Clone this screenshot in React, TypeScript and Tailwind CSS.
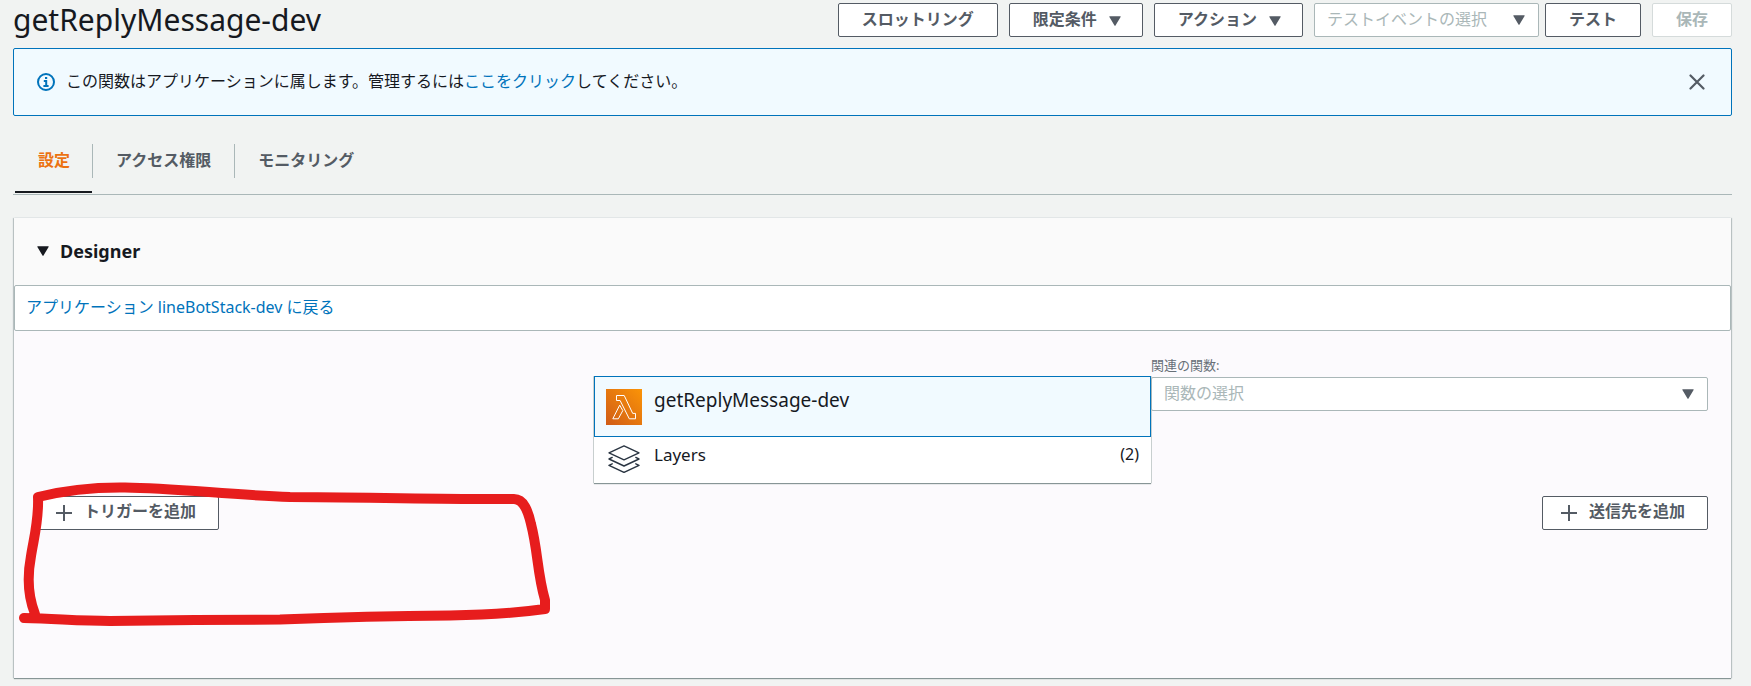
import type { ReactNode } from "react";

function Caret({ className = "" }: { className?: string }) {
  return (
    <svg viewBox="0 0 12 10" className={`h-2.5 w-3 shrink-0 fill-current ${className}`} aria-hidden="true">
      <path d="M0.8 0.3h10.4a.5.5 0 0 1 .4.8L6.5 9.5a.6.6 0 0 1-1 0L.4 1.1a.5.5 0 0 1 .4-.8z" />
    </svg>
  );
}

function PlusIcon() {
  return (
    <svg viewBox="0 0 16 16" className="h-4 w-4 shrink-0 stroke-current" strokeWidth="2" fill="none" aria-hidden="true">
      <path d="M8 0v16M0 8h16" />
    </svg>
  );
}

function Button({ children, menu, disabled }: { children: ReactNode; menu?: boolean; disabled?: boolean }) {
  const tone = disabled ? "border-[#d5dbdb] text-[#aab7b8]" : "border-[#545b64] text-[#545b64]";
  const pad = menu ? "pl-[23px] pr-[21px]" : "px-[23px]";
  return (
    <button
      type="button"
      disabled={disabled}
      className={`flex h-[34px] shrink-0 items-center gap-3 rounded-xs border bg-white pb-[3px] leading-6 font-bold whitespace-nowrap ${tone} ${pad}`}
    >
      {children}
      {menu && <Caret className="mt-1" />}
    </button>
  );
}

function AddButton({ children }: { children: ReactNode }) {
  return (
    <button
      type="button"
      className="flex h-[34px] items-center gap-3 rounded-xs border border-[#545b64] bg-white pr-[22px] pl-[18px] leading-6 font-bold whitespace-nowrap text-[#545b64]"
    >
      <PlusIcon />
      <span className="pb-1">{children}</span>
    </button>
  );
}

function Select({ id, label, placeholder }: { id: string; label?: string; placeholder: string }) {
  return (
    <div className="relative w-full">
      <select
        id={id}
        aria-label={label}
        className="h-[34px] w-full appearance-none rounded-xs border border-[#aab7b8] bg-white pr-9 pb-[3px] pl-3 leading-6 text-[#aab7b8]"
      >
        <option>{placeholder}</option>
      </select>
      <Caret className="pointer-events-none absolute top-3 right-[14px] text-[#545b64]" />
    </div>
  );
}

function InfoIcon() {
  return (
    <svg viewBox="0 0 18 18" className="h-[18px] w-[18px] shrink-0" fill="none" stroke="#0073bb" aria-hidden="true">
      <circle cx="9" cy="9" r="8" strokeWidth="2" />
      <path d="M6.8 8h2.4v4.6M6.4 13h5.2" strokeWidth="2" />
      <path d="M8 5h2.2" strokeWidth="2" />
    </svg>
  );
}

function LambdaIcon() {
  return (
    <svg viewBox="0 0 36 36" className="h-9 w-9 shrink-0" aria-hidden="true">
      <defs>
        <linearGradient id="lambda-fill" x1="0" y1="1" x2="1" y2="0">
          <stop offset="0" stopColor="#d05c17" />
          <stop offset="1" stopColor="#fb9407" />
        </linearGradient>
      </defs>
      <rect width="36" height="36" fill="url(#lambda-fill)" />
      <g fill="none" stroke="#fff" strokeWidth="1" strokeLinejoin="round">
        <path d="M10.5 6.500v5h3.600l9.200 18.300h6.200v-5.400h-2.800L18.200 6.500z" />
        <path d="M13.700 16.200 6.800 29.800h5.500l4.500-8.200z" />
      </g>
    </svg>
  );
}

function LayersIcon() {
  return (
    <svg viewBox="0 0 32 28" className="h-7 w-8 shrink-0" fill="none" stroke="#2a3542" strokeWidth="1.4" strokeLinejoin="round" strokeLinecap="round" aria-hidden="true">
      <path d="M16 .9 31 7.8 16 14.8 1 7.8z" />
      <path d="M4.200 12.400 1 14l15 7 15-7-3.200-1.600" />
      <path d="M4.200 18.800 1 20.400l15 7 15-7-3.200-1.600" />
    </svg>
  );
}

function HandDrawnMark() {
  return (
    <svg
      viewBox="14 476 550 160"
      className="pointer-events-none absolute top-[145px] left-0 h-40 w-[550px]"
      fill="none"
      stroke="#e71d1d"
      strokeWidth="10"
      strokeLinecap="round"
      strokeLinejoin="round"
      aria-hidden="true"
    >
      <path d="M35 614C27 594 28 572 31 556C34 537 39 520 38 497C58 492 85 487 125 487.500C175 488 230 495 290 497C350 497 420 499 480 499L514 499C524 499 528 511 531 524C538 551 537 572 545 600V609C510 614 480 615 450 615.500C390 616 320 618 280 619.500C220 620 170 620 110 621C80 621 60 619 24 618" />
    </svg>
  );
}

function Header() {
  return (
    <header className="flex items-center justify-between">
      <h1 className="text-[30px] leading-10 text-[#16191f]">getReplyMessage-dev</h1>
      <div className="flex items-center gap-[11px]">
        <Button>スロットリング</Button>
        <Button menu>限定条件</Button>
        <Button menu>アクション</Button>
        <div className="flex gap-1.5">
          <div className="w-[225px]">
            <Select id="test-event" label="テストイベント" placeholder="テストイベントの選択" />
          </div>
          <Button>テスト</Button>
        </div>
        <Button disabled>保存</Button>
      </div>
    </header>
  );
}

function Notice() {
  return (
    <div role="status" className="mt-2 flex h-[68px] items-center rounded-xs border border-[#0073bb] bg-[#f1faff] pr-[26px] pl-[23px]">
      <InfoIcon />
      <p className="ml-[11px] flex-1 pb-0.5 leading-6 text-[#16191f]">
        この関数はアプリケーションに属します。管理するには
        <a href="#application" className="text-[#0073bb]">ここをクリック</a>
        してください。
      </p>
      <button type="button" aria-label="閉じる" className="text-[#545b64]">
        <svg viewBox="0 0 16 16" className="h-4 w-4" fill="none" stroke="currentColor" strokeWidth="2.200" strokeLinecap="round">
          <path d="M1.500 1.500l13 13M14.500 1.500l-13 13" />
        </svg>
      </button>
    </div>
  );
}

function Tabs() {
  const tab = "h-[34px] border-l border-[#aab7b8] px-[23px] pb-0.5 leading-6 font-bold text-[#545b64]";
  return (
    <nav role="tablist" className="mt-7 flex h-[51px] border-b border-[#aab7b8]">
      <button type="button" role="tab" aria-selected="true" className="mb-px ml-0.5 border-b-2 border-[#16191f] pr-[22px] pl-[23px] pb-[15px] leading-6 font-bold text-[#ec7211]">
        設定
      </button>
      <button type="button" role="tab" aria-selected="false" className={tab}>アクセス権限</button>
      <button type="button" role="tab" aria-selected="false" className={tab}>モニタリング</button>
    </nav>
  );
}

function FunctionCard() {
  return (
    <div className="mt-[21px] bg-white shadow-[0_1px_1px_#879596,1px_0_0_#d5dbdb,-1px_0_0_#d5dbdb]">
      <div className="flex h-[61px] items-start gap-3 border border-[#0073bb] bg-[#f1faff] px-[11px] pt-3">
        <LambdaIcon />
        <span className="text-[19px] leading-[22px] text-[#16191f]">getReplyMessage-dev</span>
      </div>
      <div className="flex h-[46px] items-start pt-2 pr-3 pl-3.5">
        <LayersIcon />
        <span className="ml-3.5 flex-1 text-[17px] leading-5 text-[#16191f]">Layers</span>
        <span className="text-base leading-[18px] text-[#16191f]">(2)</span>
      </div>
    </div>
  );
}

function Designer() {
  return (
    <section className="mx-px mt-[23px] bg-[#fcfafd] shadow-[0_1px_1px_#879596,1px_0_1px_#c3cbcc,-1px_0_1px_#c3cbcc]">
      <h2 className="bg-[#fafafa]">
        <button type="button" aria-expanded="true" className="flex h-[67px] w-full items-center gap-[11px] px-[23px] pb-0.5 text-lg font-bold text-[#16191f]">
          <Caret />
          Designer
        </button>
      </h2>
      <div className="rounded-xs border border-[#aab7b8] bg-white px-[11px] pt-[9px] pb-[11px] leading-6">
        <a href="#stack" className="text-[#0073bb]">アプリケーション lineBotStack-dev に戻る</a>
      </div>
      <div className="relative px-[23px] pt-6 pb-[148px]">
        <div className="grid grid-cols-3">
          <div className="col-start-2">
            <FunctionCard />
          </div>
          <div>
            <label htmlFor="related" className="mb-0.5 block text-[13px] leading-5 text-[#687078]">関連の関数:</label>
            <Select id="related" placeholder="関数の選択" />
          </div>
        </div>
        <div className="mt-[13px] flex justify-between">
          <AddButton>トリガーを追加</AddButton>
          <AddButton>送信先を追加</AddButton>
        </div>
        <HandDrawnMark />
      </div>
    </section>
  );
}

export default function App() {
  return (
    <main className="min-h-screen bg-[#f1f3f2] pr-[19px] pb-2 pl-[13px] font-['Noto_Sans','Noto_Sans_CJK_JP',sans-serif] text-base" lang="ja">
      <Header />
      <Notice />
      <Tabs />
      <Designer />
    </main>
  );
}
